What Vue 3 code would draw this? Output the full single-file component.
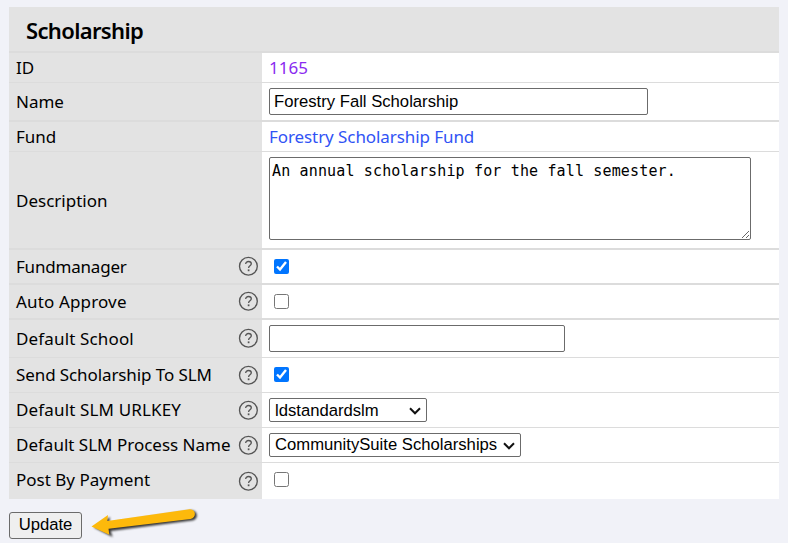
<script setup>
import { reactive } from 'vue'

const form = reactive({
  name: 'Forestry Fall Scholarship',
  description: 'An annual scholarship for the fall semester.',
  fundmanager: true,
  autoApprove: false,
  school: '',
  sendToSlm: true,
  urlKey: 'ldstandardslm',
  processName: 'CommunitySuite Scholarships',
  postByPayment: false
})

// height includes the bottom rule
const rows = [
  { key: 'id', label: 'ID', type: 'link', value: '1165', height: 30, line: 1 },
  { key: 'name', label: 'Name', type: 'text', height: 39, line: 2 },
  { key: 'fund', label: 'Fund', type: 'link', value: 'Forestry Scholarship Fund', height: 30, line: 1 },
  { key: 'description', label: 'Description', type: 'textarea', height: 98, line: 2 },
  { key: 'fundmanager', label: 'Fundmanager', type: 'checkbox', help: true, height: 35, line: 2 },
  { key: 'autoApprove', label: 'Auto Approve', type: 'checkbox', help: true, height: 35, line: 2 },
  { key: 'school', label: 'Default School', type: 'text', help: true, height: 38, line: 1 },
  { key: 'sendToSlm', label: 'Send Scholarship To SLM', type: 'checkbox', help: true, height: 35, line: 1 },
  { key: 'urlKey', label: 'Default SLM URLKEY', type: 'select', help: true, height: 35, line: 1 },
  { key: 'processName', label: 'Default SLM Process Name', type: 'select', help: true, height: 35, line: 1 },
  { key: 'postByPayment', label: 'Post By Payment', type: 'checkbox', help: true, height: 36, line: 0 }
]
</script>

<template>
  <form class="page" @submit.prevent>
    <section class="panel">
      <h2 class="title"><span>Scholarship</span></h2>
      <div
        v-for="row in rows"
        :key="row.key"
        class="row"
        :class="row.key"
        :style="{ height: row.height + 'px', borderBottomWidth: row.line + 'px' }"
      >
        <div class="label">
          <span class="label-text">{{ row.label }}</span>
          <svg v-if="row.help" class="help" viewBox="0 0 20 20">
            <circle cx="10.4" cy="10.2" r="8.9" />
            <path d="M7.700 8C7.700 6.400 8.900 5.500 10.500 5.500c1.700 0 2.800.9 2.800 2.300 0 2-2.700 1.900-2.700 4.100" />
            <path class="dot" d="M10.600 13.400v1.800" />
          </svg>
        </div>
        <div class="value">
          <a v-if="row.type === 'link'" class="link" href="#">{{ row.value }}</a>
          <input v-else-if="row.type === 'text'" v-model="form[row.key]" class="input" type="text" />
          <textarea v-else-if="row.type === 'textarea'" v-model="form[row.key]" class="area" spellcheck="false"></textarea>
          <input v-else-if="row.type === 'checkbox'" v-model="form[row.key]" class="check" type="checkbox" />
          <div v-else class="select">
            <select v-model="form[row.key]">
              <option>{{ form[row.key] }}</option>
            </select>
            <svg class="chevron" viewBox="0 0 12 8">
              <path d="M1 1.3l5 5 5-5" />
            </svg>
          </div>
        </div>
      </div>
    </section>
    <div class="actions">
      <button class="update" type="submit">Update</button>
      <svg class="arrow" viewBox="0 0 120 40">
        <path class="shadow" d="M4 22.500L20 12l-.8 6L101 5.500c7-.7 8 9 1 10L20.500 26l2.200 6z" />
        <path class="body" d="M1.500 21.500L18 10l-.7 5.900L99.500 4.200c6.500-.7 7.500 8.700 1 9.700L18.500 23.700l.8 6z" />
      </svg>
    </div>
  </form>
</template>

<style>
body {
  background: #f1f2f8;
}
</style>

<style scoped>
.page {
  box-sizing: border-box;
  height: 543px;
  padding: 7px 9px 0;
  overflow: hidden;
  background: #f1f2f8;
  color: #000;
  font-family: "Noto Sans", "Open Sans", sans-serif;
  font-size: 17px;
}

.panel {
  background: #fff;
}

.title {
  box-sizing: border-box;
  height: 46px;
  margin: 0;
  padding-left: 17px;
  border-bottom: 2px solid #dcdcdc;
  background: #e3e3e3;
  font-size: 22px;
  font-weight: 600;
  line-height: 46px;
  letter-spacing: -0.65px;
}

.row {
  box-sizing: border-box;
  display: flex;
  border-bottom: 0 solid #dcdcdc;
}

.label {
  box-sizing: border-box;
  display: flex;
  align-items: center;
  justify-content: space-between;
  width: 253px;
  padding: 0 4px 0 7px;
  background: #e3e3e3;
  white-space: nowrap;
}

.label-text {
  line-height: 24px;
}

.fundmanager .label-text {
  letter-spacing: -0.2px;
}

.sendToSlm .label-text {
  letter-spacing: -0.1px;
}

.autoApprove .label-text,
.school .label-text,
.urlKey .label-text {
  letter-spacing: 0.15px;
}

.description .label-text {
  padding-top: 1px;
}

.postByPayment .label-text {
  padding-bottom: 2px;
}

.help {
  width: 20px;
  height: 20px;
  margin-bottom: 1px;
  fill: none;
  stroke: #555;
  stroke-width: 1.35;
}

.help .dot {
  stroke-width: 1.7;
}

.value {
  display: flex;
  align-items: center;
  flex: 1;
  padding-left: 7px;
}

.link {
  color: #3053f5;
  text-decoration: none;
  line-height: 24px;
  letter-spacing: -0.08px;
}

.id .link {
  color: #8a2bf0;
  letter-spacing: 0;
}

.input,
.area {
  box-sizing: border-box;
  margin: 0;
  border: 1px solid #6b6b6b;
  border-radius: 2px;
  background: #fff;
  color: #000;
  outline: none;
}

.input {
  width: 379px;
  height: 27px;
  padding: 0 4px;
  font: 16.67px "Liberation Sans", Arial, sans-serif;
}

.school .input {
  width: 296px;
}

.area {
  width: 482px;
  height: 83px;
  margin-bottom: 3px;
  padding: 3px 2px;
  font: 15px/20px "DejaVu Sans Mono", monospace;
  letter-spacing: 0.15px;
}

.check {
  width: 15px;
  height: 15px;
  margin: 0 0 1px 5px;
}

.sendToSlm .check {
  margin-bottom: 2px;
}

.postByPayment .check {
  margin-bottom: 3px;
}

.select {
  position: relative;
  width: 158px;
  height: 24px;
}

.processName .select {
  width: 252px;
}

select {
  box-sizing: border-box;
  display: block;
  width: 100%;
  height: 100%;
  margin: 0;
  padding: 0 5px;
  border: 1px solid #6b6b6b;
  border-radius: 2px;
  background: #fff;
  color: #000;
  font: 16.67px "Liberation Sans", Arial, sans-serif;
  appearance: none;
}

.processName select {
  padding-bottom: 2px;
}

.chevron {
  position: absolute;
  top: 9px;
  right: 6px;
  width: 12px;
  height: 8px;
  fill: none;
  stroke: #111;
  stroke-width: 2;
  pointer-events: none;
}

.actions {
  display: flex;
  align-items: flex-start;
  padding-top: 13px;
}

.update {
  box-sizing: border-box;
  width: 73px;
  height: 27px;
  padding: 0 0 1px;
  border: 1px solid #6b6b6b;
  border-radius: 3px;
  background: #efefef;
  color: #000;
  font: 16.67px "Liberation Sans", Arial, sans-serif;
}

.arrow {
  width: 120px;
  height: 40px;
  margin: -7px 0 0 8px;
}

.arrow .body {
  fill: #fdb90b;
}

.arrow .shadow {
  fill: #333;
  filter: blur(1px);
}
</style>
